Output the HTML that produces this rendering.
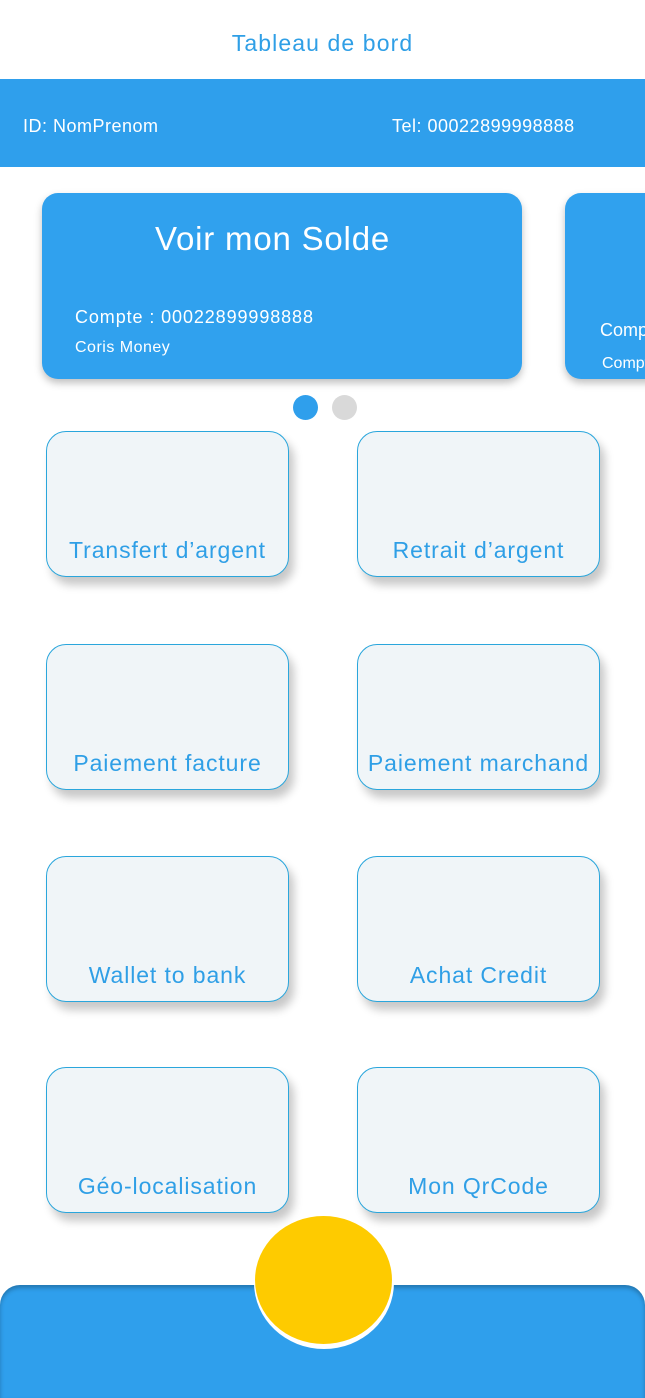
<!DOCTYPE html>
<html><head><meta charset="utf-8"><style>
*{margin:0;padding:0;box-sizing:border-box}
html,body{width:645px;height:1398px;overflow:hidden}
body{background:#fff;font-family:"Liberation Sans",sans-serif;position:relative}
.title{position:absolute;top:30px;width:100%;text-align:center;color:#2f9fe6;font-size:23px;letter-spacing:1.1px}
.bar{position:absolute;top:79px;left:0;width:645px;height:88px;background:#2f9fec;color:#fff;font-size:18px;letter-spacing:.5px}
.bar span{position:absolute;top:37px}
.card{position:absolute;top:193px;height:186px;background:#30a1ee;border-radius:16px;box-shadow:0 4px 8px rgba(0,0,0,.25);color:#fff;overflow:hidden}
.dot{position:absolute;top:395px;width:25px;height:25px;border-radius:50%}
.tile{position:absolute;width:243px;height:146px;background:#f0f5f8;border:1.5px solid #2aa6dc;border-radius:20px;box-shadow:5px 8px 9px rgba(0,0,0,.22);color:#2f9fe6;font-size:23px;letter-spacing:.9px;text-align:center}
.tile span{position:absolute;left:0;right:0;bottom:12px;white-space:nowrap}
.bottom{position:absolute;top:1285px;left:0;width:645px;height:113px;background:#2f9fec;border-radius:20px 20px 0 0;box-shadow:inset 0 3px 4px rgba(0,0,0,.25)}
.circ{position:absolute;left:254px;top:1216px;width:140px;height:133px;border-radius:50%;background:#fff}
.circ2{position:absolute;left:255px;top:1216px;width:137px;height:128px;border-radius:50%;background:#fecb00}
</style></head><body>
<div class="title">Tableau de bord</div>
<div class="bar"><span style="left:23px">ID: NomPrenom</span><span style="left:392px">Tel: 00022899998888</span></div>
<div class="card" style="left:42px;width:480px">
<div style="position:absolute;top:27px;left:113px;font-size:33px;letter-spacing:.8px">Voir mon Solde</div>
<div style="position:absolute;top:114px;left:33px;font-size:18px;letter-spacing:.9px">Compte : 00022899998888</div>
<div style="position:absolute;top:146px;left:33px;font-size:16px;letter-spacing:.5px">Coris Money</div>
</div>
<div class="card" style="left:565px;width:120px">
<div style="position:absolute;top:127px;left:35px;font-size:18px">Compte</div>
<div style="position:absolute;top:162px;left:37px;font-size:16px">Compte</div>
</div>
<div class="dot" style="left:293px;background:#2f9fec"></div>
<div class="dot" style="left:332px;background:#d9d9d9"></div>

<div class="tile" style="left:46px;top:431px"><span>Transfert d’argent</span></div>
<div class="tile" style="left:357px;top:431px"><span>Retrait d’argent</span></div>
<div class="tile" style="left:46px;top:644px"><span>Paiement facture</span></div>
<div class="tile" style="left:357px;top:644px"><span>Paiement marchand</span></div>
<div class="tile" style="left:46px;top:856px"><span>Wallet to bank</span></div>
<div class="tile" style="left:357px;top:856px"><span>Achat Credit</span></div>
<div class="tile" style="left:46px;top:1067px"><span>Géo-localisation</span></div>
<div class="tile" style="left:357px;top:1067px"><span>Mon QrCode</span></div>

<div class="bottom"></div>
<div class="circ"></div>
<div class="circ2"></div>
</body></html>
